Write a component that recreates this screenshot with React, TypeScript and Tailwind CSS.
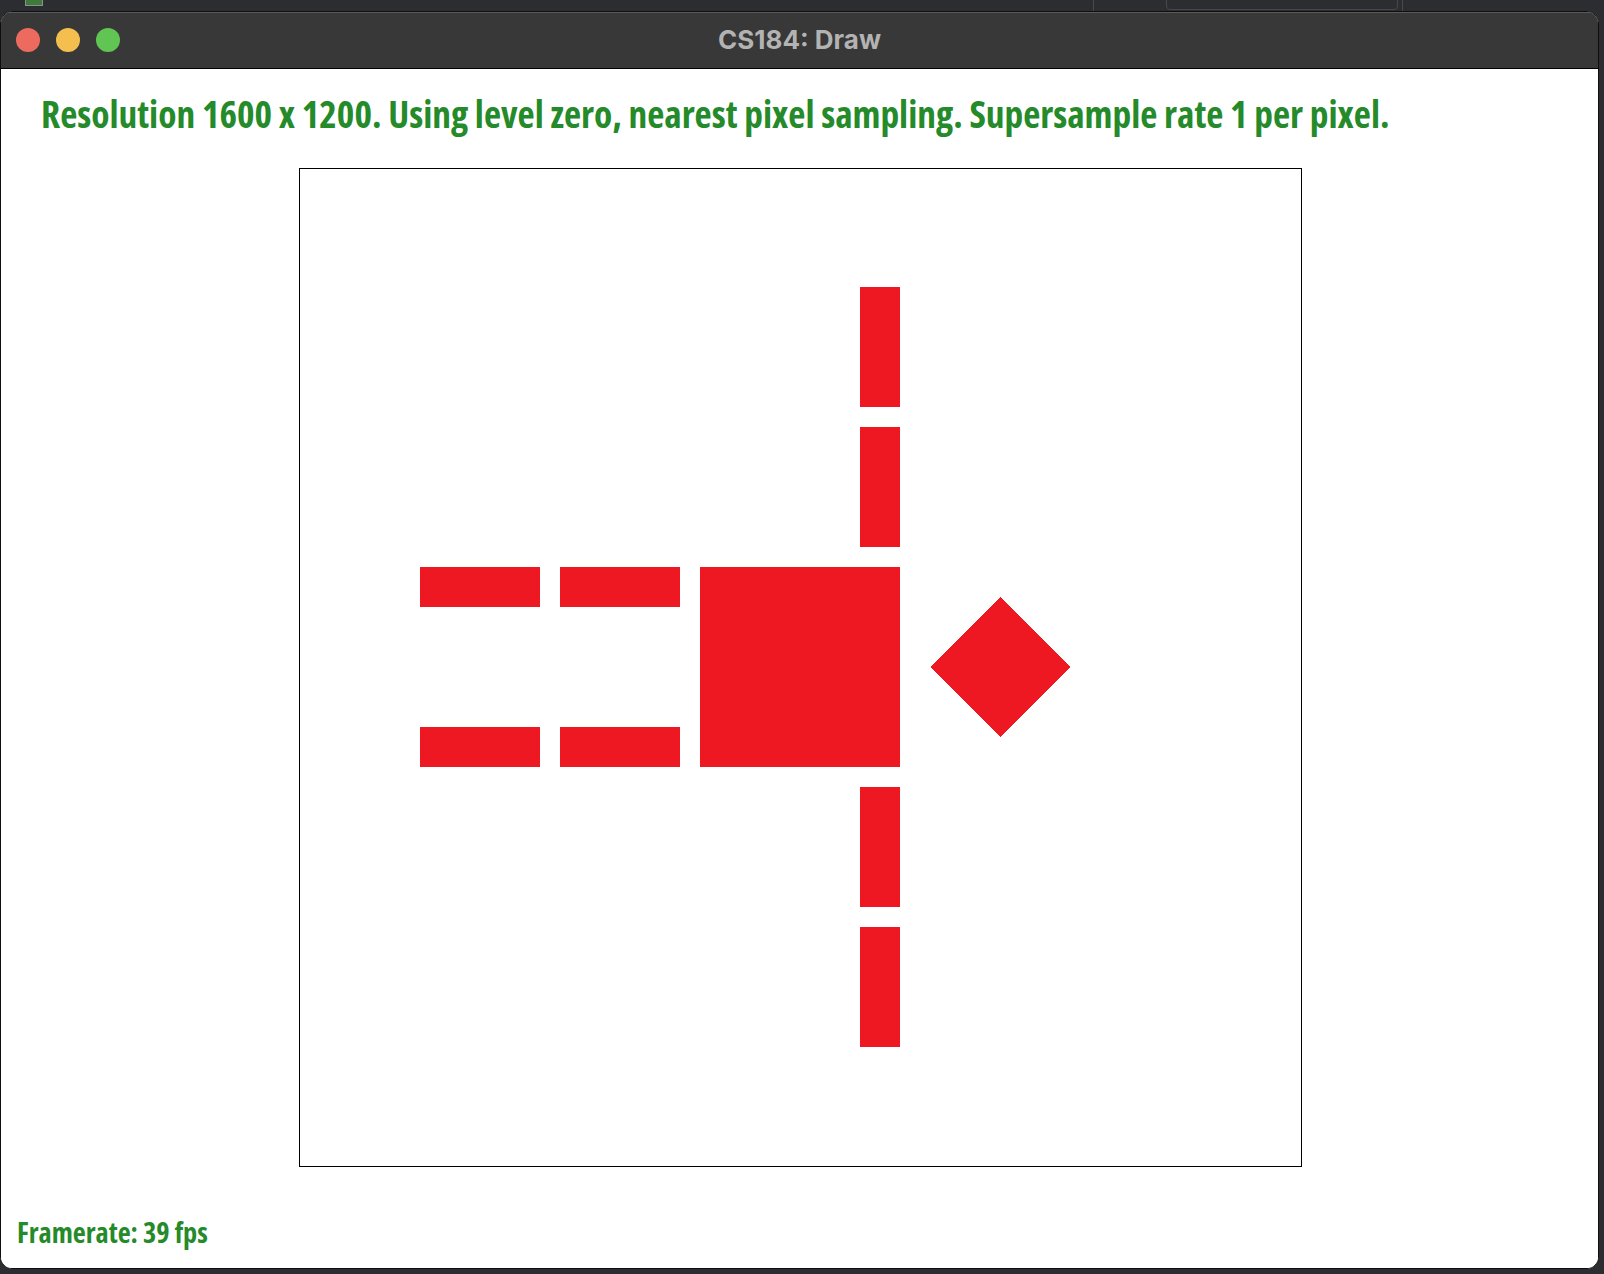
import React from "react";

const RED = "#ee1822";

function Canvas() {
  const ox = 299;
  const oy = 169;
  const rects: [number, number, number, number][] = [
    [420, 568, 120, 40],
    [560, 568, 120, 40],
    [420, 728, 120, 40],
    [560, 728, 120, 40],
    [700, 568, 200, 200],
    [860, 288, 40, 120],
    [860, 428, 40, 120],
    [860, 788, 40, 120],
    [860, 928, 40, 120],
  ];
  return (
    <svg width={1003} height={999} viewBox="0 0 1003 999" className="block" shapeRendering="crispEdges">
      <rect x={0} y={0} width={1003} height={999} fill="#ffffff" />
      <rect x={0.5} y={0.5} width={1002} height={998} fill="none" stroke="#000" strokeWidth={1} />
      {rects.map(([x, y, w, h], i) => (
        <rect key={i} x={x - ox} y={y - oy} width={w} height={h} fill={RED} />
      ))}
      <polygon
        points={`${1000 - ox},${598 - oy} ${1070 - ox},${668 - oy} ${1000 - ox},${738 - oy} ${930 - ox},${668 - oy}`}
        fill={RED}
      />
    </svg>
  );
}

export default function App() {
  return (
    <div className="w-[1604px] h-[1274px] bg-[#2b2d30] overflow-hidden flex flex-col">
      <div className="h-[11px] shrink-0 relative flex items-end gap-0">
        <div className="absolute left-[25px] -top-[6px] w-[18px] h-[12px] border border-[#8a8f94] bg-[#3f7a3a]" />
        <div className="absolute left-[1093px] top-0 w-px h-[11px] bg-[#45484c]" />
        <div className="absolute left-[1166px] -top-[8px] w-[232px] h-[18px] border border-[#45484c] rounded-[4px]" />
        <div className="absolute left-[1402px] top-0 w-px h-[11px] bg-[#45484c]" />
      </div>
      <div className="w-[1599px] h-[1258px] shrink-0 flex flex-col rounded-[12px] overflow-hidden border border-[#0e0e0e] bg-white">
        <div className="h-[57px] shrink-0 bg-[#383838] border-b border-black relative flex items-center pl-[15px] gap-[16px] shadow-[inset_0_1px_0_#5a5a5a]">
          <div className="w-[24px] h-[24px] rounded-full bg-[#ed6a5e]" />
          <div className="w-[24px] h-[24px] rounded-full bg-[#f5bf4f]" />
          <div className="w-[24px] h-[24px] rounded-full bg-[#61c554]" />
          <div
            className="absolute inset-0 flex items-center justify-center text-[26px] font-bold text-[#b3b3b3] pb-[1px]"
            style={{ fontFamily: "Inter, 'Liberation Sans', sans-serif" }}
          >
            CS184: Draw
          </div>
        </div>
        <div className="flex-1 flex flex-col bg-white" style={{ fontFamily: "'Open Sans', sans-serif" }}>
          <div className="pl-[40px] pt-[21px] h-[99px] text-[37.4px] leading-[48px] font-bold text-[#248a2a] [font-stretch:75%] whitespace-nowrap">
            Resolution 1600 x 1200. Using level zero, nearest pixel sampling. Supersample rate 1 per pixel.
          </div>
          <div className="pl-[298px]">
            <Canvas />
          </div>
          <div className="pl-[16px] pt-[48px] text-[28.3px] leading-[34px] font-bold text-[#248a2a] [font-stretch:75%] whitespace-nowrap">
            Framerate: 39 fps
          </div>
        </div>
      </div>
    </div>
  );
}
